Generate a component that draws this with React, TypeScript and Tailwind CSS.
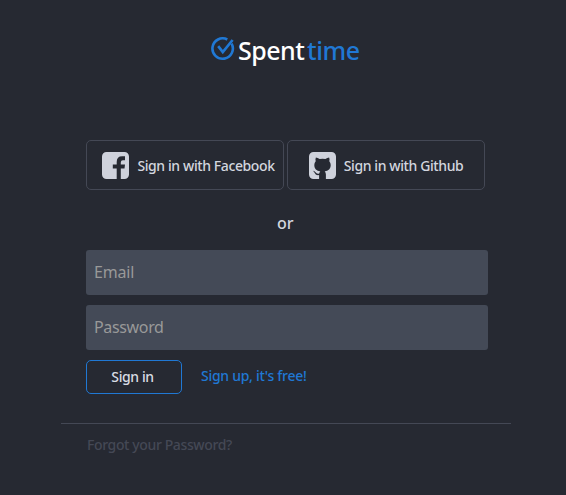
import type { ReactNode } from "react";

function LogoMark() {
  return (
    <svg className="size-6 shrink-0" viewBox="0 0 24 24" fill="none" stroke="#2078d4" strokeWidth="2.6">
      <path d="M16.3 2.5A10.2 10.2 0 1 0 20.6 6.7" />
      <path d="M7.2 9.2L11.8 15L21.6 3" strokeWidth="2.7" />
    </svg>
  );
}

function FacebookIcon() {
  return (
    <svg className="-mt-px size-[27px] shrink-0" viewBox="0 0 27 27" fill="#cfd2dc">
      <path d="M4.5 0h18A4.5 4.5 0 0 1 27 4.5v18a4.5 4.5 0 0 1-4.5 4.5H18.8V16.4h3.7l.5-3.8H18.8v-2.2q0-2.1 2.1-2.1h2.1V4.3h-2.9q-5.4 0-5.4 5.6v2.7h-3.9v3.8h3.9V27H4.5A4.5 4.5 0 0 1 0 22.5v-18A4.5 4.5 0 0 1 4.5 0z" />
    </svg>
  );
}

function GithubIcon() {
  return (
    <svg className="-mt-px size-[27px] shrink-0" viewBox="0 0 27 27" fill="#cfd2dc">
      <path d="M4.5 0h18A4.5 4.5 0 0 1 27 4.5v18a4.5 4.5 0 0 1-4.5 4.5H16.9v-4.4q0-2.2-1.2-3.2c3.8-.5 6-2.4 6-6.3q0-2.4-1.4-3.9.6-1.8-.2-3.6-1.7 0-3.7 1.5-2.8-.7-5.8 0-2-1.5-3.7-1.5-.8 1.8-.2 3.6-1.4 1.5-1.4 3.9c0 3.9 2.2 5.8 6 6.3q-.9.8-1.1 2.1-2.4.8-3.7-1.2-.9-1.7-2.7-1.6 1.3.8 1.9 2.3 1.2 2.7 4.4 2.1V27H4.5A4.5 4.5 0 0 1 0 22.5v-18A4.5 4.5 0 0 1 4.5 0z" />
    </svg>
  );
}

function SocialButton({ icon, children }: { icon: ReactNode; children: ReactNode }) {
  return (
    <button className="flex h-[50px] w-[198px] items-center justify-center gap-2 rounded-[5px] border border-[#444855] pt-0.5 text-sm font-medium whitespace-nowrap text-[#d3d6df]">
      {icon}
      {children}
    </button>
  );
}

export default function App() {
  return (
    <main className="h-[495px] w-[566px] overflow-hidden bg-[#262932] pt-[34px] font-['Noto_Sans',sans-serif]">
      <h1 className="ml-[211px] flex h-[34px] items-center gap-[3px] text-[25px] font-medium">
        <span className="-mt-1"><LogoMark /></span>
        <span className="w-[66px] tracking-[-0.5px] whitespace-nowrap text-white">Spent</span>
        <span className="tracking-[-0.45px] text-[#2078d4]">time</span>
      </h1>

      <div className="mt-[72px] ml-[86px] flex gap-[3px]">
        <SocialButton icon={<span className="ml-[7px]"><FacebookIcon /></span>}>
          <span className="tracking-[-0.4px]">Sign in with Facebook</span>
        </SocialButton>
        <SocialButton icon={<GithubIcon />}>
          <span className="tracking-[-0.4px]">Sign in with Github</span>
        </SocialButton>
      </div>

      <form className="ml-[86px] w-[402px]">
        <p className="flex h-[60px] items-center pt-1.5 pl-[191px] text-base font-medium text-[#d3d6df]">or</p>
        <input
          type="email"
          placeholder="Email"
          className="block h-[45px] w-full rounded-[3px] bg-[#444a57] px-2 pb-0.5 text-base tracking-[-0.2px] placeholder:text-[#999999]"
        />
        <input
          type="password"
          placeholder="Password"
          className="mt-2.5 block h-[45px] w-full rounded-[3px] bg-[#444a57] px-2 pb-0.5 text-base tracking-[-0.35px] placeholder:text-[#999999]"
        />
        <div className="mt-2.5 flex h-[34px] items-center gap-[19px] text-sm font-medium">
          <button type="button" className="h-[34px] w-24 rounded-[5px] border border-[#2078d4] pr-[3px] tracking-[-0.4px] text-[#d9dce4]">
            Sign in
          </button>
          <a className="pb-0.5 tracking-[-0.28px] text-[#2078d4]">Sign up, it's free!</a>
        </div>
      </form>

      <footer className="mt-[29px] ml-[61px] w-[450px] border-t border-[#444855] pt-[11px] pl-[26px] text-sm font-medium tracking-[-0.38px] text-[#444855]">
        Forgot your Password?
      </footer>
    </main>
  );
}
